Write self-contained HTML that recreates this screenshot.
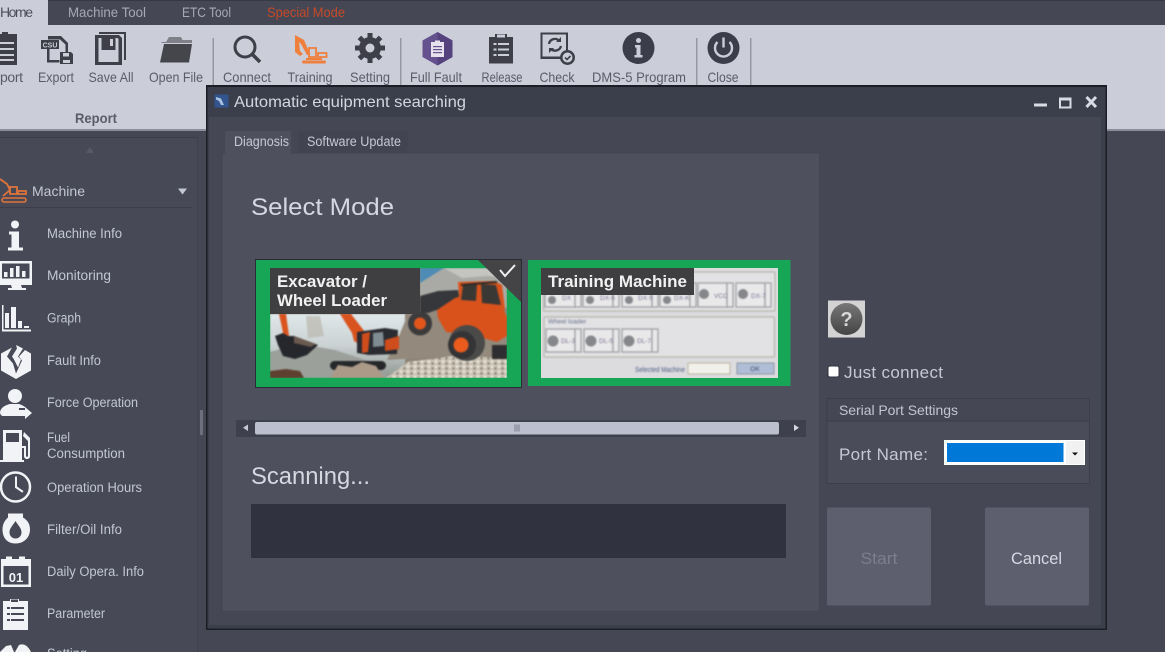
<!DOCTYPE html>
<html><head><meta charset="utf-8"><title>Automatic equipment searching</title>
<style>
html,body{margin:0;padding:0;width:1165px;height:652px;overflow:hidden;background:#454755}
svg{display:block}
#root{filter:blur(.35px)}
text{font-family:"Liberation Sans","Noto Sans CJK KR",sans-serif}
.rb{font-size:14px;fill:#5a5c69;text-anchor:middle}
.sd{font-size:13.5px;fill:#c3c6d4}
.tb{font-size:14px;fill:#a7a9b7}
.soft{filter:blur(.7px)}
</style></head><body>
<svg id="root" width="1165" height="652" viewBox="0 0 1165 652" xmlns="http://www.w3.org/2000/svg">
<defs>
<linearGradient id="q" x1="0" y1="0" x2="0" y2="1"><stop offset="0" stop-color="#777"/><stop offset="1" stop-color="#444"/></linearGradient>
<linearGradient id="sky" x1="0" y1="0" x2="0" y2="1"><stop offset="0" stop-color="#dfe7ea"/><stop offset=".5" stop-color="#c9d1d2"/><stop offset="1" stop-color="#8f9590"/></linearGradient>
<pattern id="gravel" width="7" height="5" patternUnits="userSpaceOnUse"><rect width="7" height="5" fill="#c9c1b4"/><circle cx="2" cy="1.500" r="1.300" fill="#efe9df"/><circle cx="5.500" cy="3.500" r="1.100" fill="#7f766a"/></pattern>
</defs>
<rect width="1165" height="652" fill="#454755"/>
<!-- tab strip -->
<rect width="1165" height="25" fill="#454755"/>
<rect y="0" width="1165" height="1" fill="#363844"/>
<rect y="25" width="1165" height="104" fill="#cbcdd9"/>
<rect y="129" width="1165" height="2" fill="#8b8d99"/>
<rect x="0" y="0" width="48" height="25" fill="#cbcdd9"/>
<text x="0" y="17" font-size="14" fill="#4d4f5c" textLength="33">Home</text>
<text x="68" y="17" class="tb" textLength="78" lengthAdjust="spacingAndGlyphs">Machine Tool</text>
<text x="182" y="17" class="tb" textLength="49" lengthAdjust="spacingAndGlyphs">ETC Tool</text>
<text x="267" y="17" font-size="14" fill="#c64a28" textLength="78" lengthAdjust="spacingAndGlyphs">Special Mode</text>

<!-- ribbon separators -->
<g fill="#9597a3"><rect x="212.500" y="38" width="1.500" height="47"/><rect x="400" y="38" width="1.500" height="47"/><rect x="696" y="38" width="1.500" height="47"/><rect x="750" y="38" width="1.500" height="47"/></g>

<!-- ribbon icons -->
<g fill="#3e3f49">
<path d="M-4 34h6v-2h6v2h9v31h-21z"/>
<g fill="#cbcdd9"><rect x="0" y="42" width="14" height="2"/><rect x="0" y="48" width="14" height="2"/><rect x="0" y="54" width="14" height="2"/><rect x="0" y="59" width="14" height="2"/></g>
<path d="M48 36h13l7 7v11h-2.500v-9.500l-5.500-5h-12z M47 48h2.500v12h10v2.500h-12.500z"/>
<rect x="41" y="40" width="18" height="9" fill="#3e3f49"/>
<text x="50" y="47.500" font-size="7" font-weight="bold" fill="#cbcdd9" text-anchor="middle">CSU</text>
<path d="M60 52h11l2 2v10h-13z"/><rect x="63" y="53" width="6" height="3.500" fill="#cbcdd9"/><rect x="63" y="60" width="7" height="3" fill="#cbcdd9"/>
<path d="M99 32h27v28h-2v-26h-25z"/>
<path fill-rule="evenodd" d="M95 35h24l3 3v27h-27z M98.500 38v24h20v-23l-1-1h-2v12h-14v-12z"/>
<rect x="104" y="38" width="10" height="9" fill="#3e3f49"/><rect x="110" y="39" width="3" height="7" fill="#cbcdd9"/>
<path d="M161 42h5l3-5h12l1.500 3h9.500v3h-30z" fill="#7f8088"/>
<path d="M164 44h28l-3 18.500h-29z" fill="#45464c"/>
<circle cx="245" cy="47" r="10" fill="none" stroke="#3e3f49" stroke-width="3"/>
<path d="M252 54l8 8" stroke="#3e3f49" stroke-width="3.500" fill="none"/>
<g transform="translate(370 48)"><circle r="11" fill="#3e3f49"/>
<g stroke="#3e3f49" stroke-width="5"><path d="M0-15V15M-15 0H15M-10.600-10.600L10.600 10.600M10.600-10.600L-10.600 10.600"/></g>
<circle r="4.500" fill="#cbcdd9"/></g>
<path d="M489 37h6v-3h12v3h6v26.500h-24z"/><rect x="497" y="34.500" width="8" height="3" fill="#cbcdd9"/>
<g fill="#cbcdd9"><rect x="493.500" y="43" width="3" height="2"/><rect x="498" y="43" width="11" height="2"/><rect x="493.500" y="48.500" width="3" height="2"/><rect x="498" y="48.500" width="11" height="2"/><rect x="493.500" y="54" width="3" height="2"/><rect x="498" y="54" width="11" height="2"/></g>
<path fill-rule="evenodd" d="M540.500 32.500h27.500v21h-2v-19h-23.500v22h18v2.500h-20z"/>
<path d="M549 44a6 6 0 0 1 10-3.500M561 46a6 6 0 0 1-10 3" fill="none" stroke="#3e3f49" stroke-width="2.300"/>
<path d="M561 37v5h-5zM549 53v-5h5z"/>
<circle cx="567.500" cy="57.500" r="7.500" fill="#3e3f49"/><circle cx="567.500" cy="57.500" r="5" fill="#cbcdd9"/>
<path d="M565 57.500l2 2 3.500-3.500" fill="none" stroke="#3e3f49" stroke-width="1.600"/>
<circle cx="638.500" cy="48" r="16" fill="#3b3d4a"/>
<circle cx="638.500" cy="40.500" r="2.500" fill="#cbcdd9"/><path d="M635 45h5.500v10h2v2.500h-8v-2.500h2v-7.500h-1.500z" fill="#cbcdd9"/>
<circle cx="723.500" cy="48" r="16" fill="#3b3d4a"/>
<path d="M717.500 42a8.500 8.500 0 1 0 12 0" fill="none" stroke="#cbcdd9" stroke-width="2.400"/>
<rect x="722.300" y="37.500" width="2.400" height="10" fill="#cbcdd9"/>
</g>
<!-- training excavator orange -->
<path d="M295 35l9 5 6 14-3 1-6-11-2-2 1 9 3 3-3 2-5-4z" fill="#ef7f3c"/>
<g fill="none" stroke="#ef7f3c" stroke-width="1.800">
<path d="M309 48h7v9h-7zM318 53h8.500v4h-8.500z"/></g>
<rect x="302" y="60.500" width="24" height="3" rx="1.500" fill="#ef7f3c"/>
<rect x="306" y="58" width="16" height="2" fill="#ef7f3c"/>
<!-- full fault hex -->
<path d="M437.500 32l15 8.500v16.500l-15 8.500-15-8.500v-16.500z" fill="#66518f"/>
<path d="M437.500 32l15 8.500v16.500l-15 8.500z" fill="#56417f"/>
<path d="M431 42h13v15h-13z" fill="#e8e2ee"/><rect x="435" y="40.500" width="5" height="2.500" fill="#e8e2ee"/>
<g fill="#66518f"><rect x="433" y="46" width="9" height="1.200"/><rect x="433" y="49" width="9" height="1.200"/><rect x="433" y="52" width="9" height="1.200"/></g>

<!-- ribbon labels -->
<text x="0" y="82" class="rb" style="text-anchor:start" textLength="23">port</text>
<text x="56" y="82" class="rb" textLength="36" lengthAdjust="spacingAndGlyphs">Export</text>
<text x="111" y="82" class="rb" textLength="45" lengthAdjust="spacingAndGlyphs">Save All</text>
<text x="176" y="82" class="rb" textLength="54" lengthAdjust="spacingAndGlyphs">Open File</text>
<text x="247" y="82" class="rb" textLength="48" lengthAdjust="spacingAndGlyphs">Connect</text>
<text x="310" y="82" class="rb" textLength="45" lengthAdjust="spacingAndGlyphs">Training</text>
<text x="370" y="82" class="rb" textLength="40" lengthAdjust="spacingAndGlyphs">Setting</text>
<text x="436" y="82" class="rb" textLength="52" lengthAdjust="spacingAndGlyphs">Full Fault</text>
<text x="502" y="82" class="rb" textLength="41" lengthAdjust="spacingAndGlyphs">Release</text>
<text x="557" y="82" class="rb" textLength="35" lengthAdjust="spacingAndGlyphs">Check</text>
<text x="639" y="82" class="rb" textLength="94" lengthAdjust="spacingAndGlyphs">DMS-5 Program</text>
<text x="723" y="82" class="rb" textLength="31" lengthAdjust="spacingAndGlyphs">Close</text>
<text x="96" y="123" font-size="14" font-weight="bold" fill="#5a5c69" text-anchor="middle" textLength="42" lengthAdjust="spacingAndGlyphs">Report</text>

<!-- sidebar -->
<rect x="0" y="137" width="197" height="515" fill="#474956"/>
<rect x="0" y="137" width="197" height="1" fill="#3b3d49"/>
<rect x="197" y="137" width="1" height="515" fill="#3f414d"/>
<rect x="198" y="131" width="8" height="521" fill="#454755"/>
<path d="M86 153l4-6 4 6z" fill="#575966"/>
<rect x="0" y="207" width="192" height="1" fill="#3b3d49"/>
<text x="32" y="196" font-size="14" fill="#c3c6d4" textLength="53" lengthAdjust="spacingAndGlyphs">Machine</text>
<path d="M178 188.500h9l-4.500 6z" fill="#c3c6d4"/>
<rect x="200" y="410" width="3" height="25" fill="#6d6f7c"/>
<g fill="none" stroke="#e0743b" stroke-width="1.800">
<path d="M0 179l7 5 3 6-7 6M10 187h7v7h-7zM18 191h8v3h-8z"/></g>
<rect x="2" y="198" width="24" height="4" rx="2" fill="none" stroke="#e0743b" stroke-width="1.600"/>

<!-- sidebar icons -->
<g fill="#f2f3f6">
<circle cx="15" cy="224.500" r="4"/><path d="M9 231.500h10v16h4v3h-15v-3h3.500v-13h-2.500z"/>
<path fill-rule="evenodd" d="M0 261h32v24h-32z M2 263.500v15h27.500v-15z"/>
<path d="M11 285h10l1 3h4v2h-18v-2h4z"/>
<rect x="4" y="272" width="3.500" height="5"/><rect x="10" y="268" width="3.500" height="9"/><rect x="16" y="266" width="3.500" height="11"/><rect x="22" y="271" width="3.500" height="6"/>
<rect x="2" y="305" width="1.500" height="26"/><rect x="2" y="329.500" width="29" height="2"/>
<rect x="5" y="313" width="4" height="15"/><rect x="11" y="307" width="5" height="21"/><rect x="18" y="321" width="4" height="7"/><rect x="24" y="326" width="5" height="2"/>
<path d="M16 345l7 3.500-5 8 3 3-3 8-4-8 -2-3 5-8zM25 350l6 3.500v17l-15 8.500-15-8.500v-17l11-6-5 9 6 7 3 10 6-13-3-4z"/>
<circle cx="15" cy="396" r="7"/><path d="M0 412c1-5 6-7 10-8h9c3 1 5 2 7 4h-7v8h-16c-2 0-3-2-3-4z"/><path d="M19 410h6v-3l7 6-7 6v-3h-6z"/>
<path fill-rule="evenodd" d="M3 430h19v30h2v2h-24v-2h3z M6 433v9h13v-9z"/>
<path d="M24 432l6 6v18c0 4-6 4-6 0v-8h-2v-2h4v10c0 1 2 1 2 0v-15l-5-5z"/>
<circle cx="15.500" cy="487" r="14.500" fill="none" stroke="#f2f3f6" stroke-width="2.500"/>
<path d="M15 476.500h2v10l6.500 4.500-1.200 1.700-7.300-5z"/>
<path fill-rule="evenodd" d="M8 513.500h15v4c5 3 7 7 7 12 0 8-6 14-14.500 14s-13-6-13-14c0-5 2-9 5.500-12z M15.500 521c-3 5-6 7-6 11.500a6 6 0 0 0 12 0c0-4.500-3-6.500-6-11.500z"/>
<path fill-rule="evenodd" d="M1 559h5v-2.500h6v2.500h7v-2.500h6v2.500h6v28h-30z M3.500 566v18.500h25v-18.500z"/>
<text x="16" y="582" font-size="13" font-weight="bold" text-anchor="middle" fill="#f2f3f6">01</text>
<path fill-rule="evenodd" d="M3 601h7v-2h9v2h9v29h-25z"/>
<g fill="#474956"><rect x="7" y="607" width="3" height="2"/><rect x="11" y="607" width="13" height="2"/><rect x="7" y="613" width="3" height="2"/><rect x="11" y="613" width="13" height="2"/><rect x="7" y="619" width="3" height="2"/><rect x="11" y="619" width="13" height="2"/><rect x="11" y="599.500" width="7" height="2.500"/></g>
<path d="M0 652l6-6 5-1 3 7zM15 652l4-7c5-2 9 1 12 7z"/>
</g>

<text x="47" y="238" class="sd" textLength="75" lengthAdjust="spacingAndGlyphs">Machine Info</text>
<text x="47" y="280" class="sd" textLength="64" lengthAdjust="spacingAndGlyphs">Monitoring</text>
<text x="47" y="322.500" class="sd" textLength="34" lengthAdjust="spacingAndGlyphs">Graph</text>
<text x="47" y="365" class="sd" textLength="54" lengthAdjust="spacingAndGlyphs">Fault Info</text>
<text x="47" y="407" class="sd" textLength="91" lengthAdjust="spacingAndGlyphs">Force Operation</text>
<text x="47" y="442" class="sd" textLength="23" lengthAdjust="spacingAndGlyphs">Fuel</text>
<text x="47" y="458" class="sd" textLength="78" lengthAdjust="spacingAndGlyphs">Consumption</text>
<text x="47" y="492" class="sd" textLength="95" lengthAdjust="spacingAndGlyphs">Operation Hours</text>
<text x="47" y="534" class="sd" textLength="75" lengthAdjust="spacingAndGlyphs">Filter/Oil Info</text>
<text x="47" y="576" class="sd" textLength="97" lengthAdjust="spacingAndGlyphs">Daily Opera. Info</text>
<text x="47" y="618" class="sd" textLength="58" lengthAdjust="spacingAndGlyphs">Parameter</text>
<text x="47" y="658" class="sd" textLength="40" lengthAdjust="spacingAndGlyphs">Setting</text>

<!-- dialog -->
<rect x="206" y="85" width="901" height="545" fill="#1d1e25"/>
<rect x="207.500" y="87" width="898" height="541.500" fill="#3b3e4b"/>
<rect x="209" y="117" width="892" height="508" fill="#454755"/>
<rect x="214.500" y="94.500" width="14" height="13" fill="#33558f"/><path d="M216 97l5 1.500 3 6.500h-3l-2-4-3-1.500z" fill="#a9c0e0"/>
<text x="234" y="107" font-size="16" fill="#d4d6df" textLength="232" lengthAdjust="spacingAndGlyphs">Automatic equipment searching</text>
<rect x="1034" y="103.500" width="13" height="3" fill="#d8dae4"/>
<rect x="1060" y="98.500" width="10.500" height="9" fill="none" stroke="#d8dae4" stroke-width="2"/><rect x="1059" y="97.500" width="12.500" height="3" fill="#d8dae4"/>
<path d="M1086.500 97l9.500 10M1096 97l-9.500 10" stroke="#d8dae4" stroke-width="3" fill="none"/>

<!-- tabs -->
<rect x="225" y="131" width="66" height="23" rx="2" fill="#4e505e"/>
<rect x="298" y="131" width="110" height="22" rx="2" fill="#424451"/>
<text x="234" y="146" font-size="13.500" fill="#c6c8d4" textLength="55" lengthAdjust="spacingAndGlyphs">Diagnosis</text>
<text x="307" y="146" font-size="13.500" fill="#c6c8d4" textLength="94" lengthAdjust="spacingAndGlyphs">Software Update</text>

<!-- content panel -->
<rect x="222" y="153" width="597.500" height="458.500" rx="2" fill="#4e505e" stroke="#434552" stroke-width="1"/>
<rect x="225.500" y="152" width="65" height="3" fill="#4e505e"/>
<text x="251" y="215" font-size="24" fill="#d5d7e1" textLength="143" lengthAdjust="spacingAndGlyphs">Select Mode</text>

<!-- excavator card -->
<rect x="255.500" y="259.500" width="266" height="128" fill="#17a556" stroke="#2a2c35" stroke-width="1"/>
<svg x="270" y="268" width="237" height="110" viewBox="270 268 237 110">
<g class="soft">
<rect x="270" y="268" width="237" height="110" fill="#8d8478"/>
<!-- left scene -->
<rect x="270" y="314" width="135" height="64" fill="url(#sky)"/>
<path d="M270 352l30-8 35 6 30 10 25 18h-120z" fill="#9ba09b"/>
<path d="M306 316h14l4 20-16 2z" fill="#b9b8ac" opacity=".7"/>
<!-- right scene rock -->
<rect x="420" y="268" width="87" height="40" fill="#a9aaa5"/>
<path d="M420 268h24l-24 15z" fill="#4e8bb5"/>
<path d="M444 268h63v10l-20-2-25 2z" fill="#c4c5c1"/>
<path d="M408 314l12-8 30 8 57 20v24l-50-2-70 4 12-24z" fill="#93897c"/>
<path d="M386 378l22-16 45-6 54 2v20z" fill="url(#gravel)"/>
<path d="M270 378v-7l16-2 14 2 4 7z" fill="#5f4030"/>
<!-- excavator -->
<path d="M279 314h7l3 22-5 1z" fill="#d9531e"/>
<path d="M340 314h11l14 18-6 12-5-3-2-8z" fill="#d9531e"/>
<path d="M275 336l8-3 5 3 6 0 24 9-11 10-12 4-12-3-5-11z" fill="#26272c"/>
<path d="M294 336l22 8-5 3-17-4z" fill="#6b5a50"/>
<path d="M357 332l28-4 13 2 -1 24-28 1-12-2z" fill="#2a2c31"/>
<path d="M362 334l8-2-2 20-6 1z" fill="#cf4d1c"/>
<path d="M385 340l14-4v13l-14 2z" fill="#cf4d1c"/>
<path d="M373 333l10-1 1 14-11 1z" fill="#7f8c92"/>
<rect x="330" y="361" width="56" height="9" rx="4.500" fill="#26272a"/>
<path d="M330 378l8-13 14 2 10-5 14 4 8 12z" fill="#ab9a88"/>
<!-- loader -->
<path d="M420 296l18-5 20-1 2 10-12 6-20 7-8-1z" fill="#36373a"/>
<path d="M437 310l18-12 13-4h30l6 16 3 8v18l-10 6-25-7-26-3-8-14z" fill="#d9521c"/>
<path d="M458 282l36-1 8 4 3 24-7 3-38-3z" fill="#d9521c"/>
<path d="M463 285l14-1-1 17-15-1zM481 284l15 1 5 20-19-2z" fill="#3a3835"/>
<path d="M461 285l36-3" stroke="#2e2a28" stroke-width="2" fill="none"/>
<circle cx="420" cy="323.500" r="12" fill="#3b3b3c"/><circle cx="420" cy="323.500" r="6" fill="#e2561c"/>
<circle cx="467" cy="343" r="18" fill="#4a4a48"/><circle cx="462" cy="345" r="14" fill="#343436"/><circle cx="461" cy="345" r="7.500" fill="#ea5b1d"/>
<rect x="492" y="345" width="15" height="14" fill="#2e2e30"/>
</g>
</svg>
<rect x="270" y="268" width="150" height="46" fill="#3f3f41"/>
<text x="277" y="287" font-size="16.500" font-weight="bold" fill="#f1f1f1" textLength="90" lengthAdjust="spacingAndGlyphs">Excavator /</text>
<text x="277" y="306" font-size="16.500" font-weight="bold" fill="#f1f1f1" textLength="110" lengthAdjust="spacingAndGlyphs">Wheel Loader</text>
<path d="M478 260h43v42z" fill="#444446"/>
<path d="M500 270l5 6 10-11" fill="none" stroke="#f0f0f0" stroke-width="2"/>

<!-- training card -->
<rect x="528" y="260" width="262.500" height="126" fill="#17a556"/>
<rect x="541" y="268" width="237" height="110" fill="#dcdcdf"/>
<g class="soft">
<g fill="#e2e2e4" stroke="#b6b4aa" stroke-width="1.200">
<rect x="543.500" y="272" width="231.500" height="39" rx="1"/>
<rect x="544" y="317" width="230.500" height="40" rx="1"/>
</g>
<g fill="#e9e9ea" stroke="#a0a1a5" stroke-width="1.300">
<rect x="545" y="283" width="30" height="24"/><rect x="575" y="283" width="6" height="24"/>
<rect x="583" y="283" width="30" height="24"/><rect x="613" y="283" width="6" height="24"/>
<rect x="622" y="283" width="30" height="24"/><rect x="652" y="283" width="6" height="24"/>
<rect x="660" y="283" width="30" height="24"/><rect x="690" y="283" width="6" height="24"/>
<rect x="698" y="283" width="29" height="24"/><rect x="727" y="283" width="6" height="24"/>
<rect x="736" y="283" width="29" height="24"/><rect x="765" y="283" width="6" height="24"/>
<rect x="546" y="329" width="29" height="23"/><rect x="575" y="329" width="6" height="23"/>
<rect x="584" y="329" width="29" height="23"/><rect x="613" y="329" width="6" height="23"/>
<rect x="622" y="329" width="30" height="23"/><rect x="652" y="329" width="6" height="23"/>
</g>
<g fill="#85878a"><circle cx="552" cy="300" r="4"/><circle cx="590" cy="300" r="4"/><circle cx="629" cy="300" r="4"/><circle cx="667" cy="300" r="4"/><circle cx="704" cy="294" r="5"/><circle cx="743" cy="294" r="5"/><circle cx="553" cy="341" r="5.500"/><circle cx="591" cy="341" r="5.500"/><circle cx="629" cy="341" r="5.500"/></g>
<g font-size="6.500" fill="#7b6f90"><text x="562" y="300">DX</text><text x="600" y="300">DX-5</text><text x="638" y="300">DX-5</text><text x="674" y="300">DX-K</text><text x="714" y="298">VCC</text><text x="751" y="298">DX-7</text><text x="561" y="343">DL-3</text><text x="599" y="343">DL-5</text><text x="637" y="343">DL-7</text></g>
<text x="548" y="323.500" font-size="6.500" fill="#66708a">Wheel loader</text>
<text x="635" y="372" font-size="7" fill="#4d5b80" textLength="50" lengthAdjust="spacingAndGlyphs">Selected Machine</text>
<rect x="688" y="363" width="42" height="11" fill="#f2f0ea" stroke="#b9b39f"/>
<rect x="737" y="363" width="37" height="11" fill="#afbdd6" stroke="#8d95a5"/>
<text x="755" y="371" font-size="6.500" fill="#3f4c6b" text-anchor="middle">OK</text>
</g>
<rect x="541" y="268" width="153" height="27" fill="#3f3f41"/>
<text x="548" y="287" font-size="16.500" font-weight="bold" fill="#f1f1f1" textLength="139" lengthAdjust="spacingAndGlyphs">Training Machine</text>

<!-- scrollbar -->
<rect x="236" y="420" width="570" height="17" fill="#3e404d"/>
<rect x="255" y="422" width="524" height="12.500" rx="2" fill="#bcbfce"/>
<g fill="#7a7c8b"><rect x="514.500" y="424.500" width="1" height="7"/><rect x="516.500" y="424.500" width="1" height="7"/><rect x="518.500" y="424.500" width="1" height="7"/></g>
<path d="M248 424.500v6.500l-5-3.250z" fill="#c6c8d4"/>
<path d="M794 424.500v6.500l5-3.250z" fill="#d6d8e2"/>

<!-- scanning -->
<text x="251" y="484" font-size="24" fill="#d5d7e1" textLength="119" lengthAdjust="spacingAndGlyphs">Scanning...</text>
<rect x="251" y="504" width="535" height="54" fill="#30333f"/>

<!-- right column -->
<rect x="828" y="300.500" width="37" height="37" fill="#d3d3d3"/>
<circle cx="846.500" cy="319" r="16" fill="url(#q)"/>
<text x="846.500" y="326" font-size="20" font-weight="bold" fill="#d8d8d8" text-anchor="middle">?</text>
<rect x="828" y="366" width="11" height="11" rx="2" fill="#fff" stroke="#30323d" stroke-width="1"/>
<text x="844" y="378" font-size="17" fill="#c6c8d5" textLength="99" lengthAdjust="spacing">Just connect</text>
<rect x="827" y="398.500" width="262.500" height="85" fill="#4a4c5a" stroke="#3c3e4a"/>
<rect x="827.500" y="399" width="261.500" height="22" fill="#454755"/>
<rect x="827" y="420.500" width="262.500" height="1" fill="#3c3e4a"/>
<text x="839" y="415" font-size="14" fill="#c3c5d2" textLength="119" lengthAdjust="spacing">Serial Port Settings</text>
<text x="839" y="460" font-size="17" fill="#c6c8d5" textLength="89" lengthAdjust="spacing">Port Name:</text>
<rect x="944" y="440" width="141" height="25" fill="#fff"/>
<rect x="1066" y="441" width="18" height="23" fill="#f1f1f1"/>
<rect x="947" y="443" width="116.500" height="19" fill="#0078d7"/>
<path d="M1072 452.500h6l-3 3z" fill="#111"/>
<rect x="827" y="507.500" width="104" height="98" rx="2" fill="#5d5f6e"/>
<rect x="985" y="507.500" width="104" height="98" rx="2" fill="#5d5f6e"/>
<text x="879" y="564" font-size="17" fill="#7c7e8d" text-anchor="middle" textLength="37" lengthAdjust="spacingAndGlyphs">Start</text>
<text x="1036.500" y="564" font-size="17" fill="#d6d9e3" text-anchor="middle" textLength="51" lengthAdjust="spacingAndGlyphs">Cancel</text>
</svg>
</body></html>
